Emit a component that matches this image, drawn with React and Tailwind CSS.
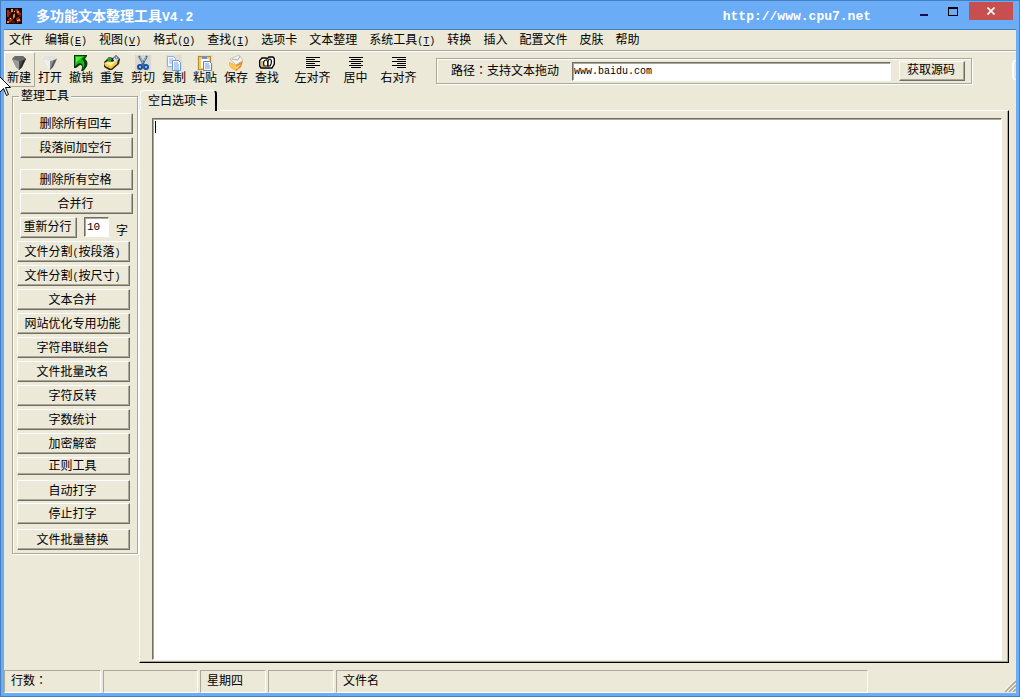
import React from 'react';

const FACE =
  'border border-t-white border-l-white border-r-[#716f64] border-b-[#716f64] bg-[#ece9d8] shadow-[inset_-1px_-1px_0_#aca899] whitespace-nowrap';
const ETCHED = 'border border-[#aca899] shadow-[1px_1px_0_#fff,inset_1px_1px_0_#fff]';
const SUNKEN =
  'border border-t-[#716f64] border-l-[#716f64] border-r-white border-b-white bg-white outline-none shadow-[inset_1px_1px_0_#aca899]';

const menus = [
  ['文件'],
  ['编辑', 'E'],
  ['视图', 'V'],
  ['格式', 'O'],
  ['查找', 'I'],
  ['选项卡'],
  ['文本整理'],
  ['系统工具', 'T'],
  ['转换'],
  ['插入'],
  ['配置文件'],
  ['皮肤'],
  ['帮助'],
];

function Icon({ children }) {
  return (
    <svg viewBox="0 0 16 16" className="block h-4 w-4" aria-hidden="true">
      {children}
    </svg>
  );
}

function Gem({ light }) {
  return (
    <Icon>
      <path d="M1 4 4 1h8l3 3-4 8-3 3-3-3z" fill={light ? '#d0d0d0' : '#808080'} />
      <path d="M1 4 8 6v9l-3-3z" fill={light ? '#f0f0f0' : '#9a9a9a'} />
      <path d="M8 6 15 4l-4 8-3 3z" fill={light ? '#8d8d8d' : '#4a4a4a'} />
      <path d="M12 5 15 3l-4 9-3 3z" fill={light ? '#555' : '#262626'} />
      <path d="M1 4 4 1h8l3 3-7 2z" fill={light ? '#e2e2e2' : '#6a6a6a'} />
    </Icon>
  );
}

function Lines({ rows }) {
  return (
    <Icon>
      {rows.map(([x, w], i) => (
        <rect key={i} x={x} y={2 + i * 2} width={w} height="1" fill="#000" />
      ))}
    </Icon>
  );
}

const icons = {
  undo: (
    <Icon>
      <path d="M1 0h13v1l-2 3c4 3 3 8-2 12H8c2-4 1-6-1-6l-4 3H1z" fill="#063b06" />
      <path d="M2 1h10L9 4c3 3 3 6 1 10 0-4-1-6-4-6l-4 3z" fill="#18b818" />
      <path d="M3 2h6L3 8z" fill="#5be53b" />
    </Icon>
  ),
  redo: (
    <Icon>
      <path d="m0 7 5-5 4 1 3-3 4 4-1 5-7 6H5l-5-3z" fill="#222" />
      <path d="m0 8 4-2 5 1 5-2-1 4-6 5-6-3z" fill="#f6c83a" />
      <path d="m1 8 6-1 5-1-5 5z" fill="#fff3a5" />
      <path d="m3 5 2-3 3 2-2 3z" fill="#2aa52e" />
      <path d="m9 4 3-3 3 3-4 3z" fill="#d5e9fa" />
      <path d="m11 2 1 2 2-1" stroke="#3978cc" fill="none" />
    </Icon>
  ),
  cut: (
    <Icon>
      <path fill="#d9d7d1" d="M0 0h16v16H0z" />
      <path d="m4 1 5 9M12 1 7 10" stroke="#40658f" strokeWidth="2" />
      <path d="m5 2 3 6M11 2 9 6" stroke="#a5c4df" />
      <circle cx="5" cy="12" r="2" fill="none" stroke="#174ea8" strokeWidth="2" />
      <circle cx="11" cy="12" r="2" fill="none" stroke="#174ea8" strokeWidth="2" />
    </Icon>
  ),
  copy: (
    <Icon>
      <path fill="#dfddd6" d="M0 0h16v16H0z" />
      <path d="M1.500 1.500h6l2 2v8h-8z" fill="#f6faff" stroke="#8eb0dc" />
      <path d="M3 4h4M3 6h4M3 8h4" stroke="#91b5e8" />
      <path d="M6.500 5.500h6l2 2v8h-8z" fill="#fff" stroke="#6f99d2" />
      <path d="M8 8h4M8 10h5M8 12h5M8 14h5" stroke="#6a9be2" />
    </Icon>
  ),
  paste: (
    <Icon>
      <path fill="#dfddd6" d="M0 0h16v16H0z" />
      <rect x="1.500" y="1.500" width="12" height="13" fill="#f4cb63" stroke="#b78b2b" />
      <rect x="4" y="4" width="8" height="9" fill="#fff" />
      <path d="M5 1h5v3H5z" fill="#7891b5" />
      <path d="M6.500 6.500h6l2 2v7h-8z" fill="#f6faff" stroke="#5584c5" />
      <path d="M8 9h4M8 11h5M8 13h5" stroke="#6a9be2" />
    </Icon>
  ),
  save: (
    <Icon>
      <path d="m1 7 7 3 7-4-2 6-5 4-6-4z" fill="#e98619" />
      <path d="m1 7 7 3v6l-6-4z" fill="#ffc14c" />
      <path d="m2 4 9-4 4 5-7 5z" fill="#f3f3f3" stroke="#b3b1ad" strokeWidth=".7" />
      <path d="m4 4 6 1 2-4" stroke="#aaa" fill="none" />
      <path d="m4 10 4 2 5-3-4 5z" fill="#ffe18c" />
    </Icon>
  ),
  find: (
    <Icon>
      <path d="M.7 5.500 3 3h4l1 1 2-2h4l1.300 1.500V9L13 13H2L.7 11z" fill="#fff" stroke="#000" strokeWidth="1.400" />
      <path d="M2 6h3v6H2z" fill="#f5b726" />
      <path d="M5 11c-1-4 0-6 2-6s2 3 2 6z" fill="#fff" stroke="#000" strokeWidth="1.200" />
      <path d="M9 7c0-2 1-3 2-3s2 2 1 5l-1 2H9z" fill="#fff" stroke="#000" strokeWidth="1.200" />
    </Icon>
  ),
};

const tools = [
  ['新建', <Gem />],
  ['打开', <Gem light />],
  ['撤销', icons.undo],
  ['重复', icons.redo],
  ['剪切', icons.cut],
  ['复制', icons.copy],
  ['粘贴', icons.paste],
  ['保存', icons.save],
  ['查找', icons.find],
];

const aligns = [
  ['左对齐', [[1, 14], [1, 9], [1, 14], [1, 9], [1, 14], [1, 9]]],
  ['居中', [[1, 14], [3, 10], [1, 14], [3, 10], [1, 14], [3, 10]]],
  ['右对齐', [[1, 14], [6, 9], [1, 14], [6, 9], [1, 14], [6, 9]]],
];

function Wide({ children, className = 'h-[21px]' }) {
  return (
    <button type="button" className={`block w-full pr-[2px] leading-3 ${FACE} ${className}`}>
      {children}
    </button>
  );
}

function Mono({ children }) {
  return <span className="font-['Liberation_Mono',monospace] text-[10px] leading-[0]">{children}</span>;
}

function Colon() {
  return (
    <span lang="zh-TW" className="font-['Noto_Sans_CJK_TC',sans-serif] leading-[0]">
      ：
    </span>
  );
}

function Toolbar() {
  return (
    <div className="flex h-[36px] items-start border-t border-white">
      {tools.map(([label, icon], i) => (
        <button
          key={label}
          type="button"
          className={`flex h-[35px] w-[31px] shrink-0 flex-col items-center border pt-[2px] pr-px leading-[14px] ${
            i === 0 ? 'border-t-white border-l-white border-r-[#aca899] border-b-[#aca899]' : 'border-transparent'
          }`}
        >
          {icon}
          <span className="whitespace-nowrap">{label}</span>
        </button>
      ))}
      <div className="w-2 shrink-0" />
      {aligns.map(([label, rows]) => (
        <button
          key={label}
          type="button"
          className="flex h-[35px] w-[43px] shrink-0 flex-col items-center border border-transparent pt-[2px] leading-[14px]"
        >
          <Lines rows={rows} />
          <span className="whitespace-nowrap">{label}</span>
        </button>
      ))}
      <div className={`mt-[6px] mr-11 ml-4 flex h-[26px] min-w-0 flex-1 items-center pr-[6px] pl-[14px] ${ETCHED}`}>
        <label htmlFor="path" className="w-[121px] shrink-0 whitespace-nowrap">
          路径
          <Colon />
          支持文本拖动
        </label>
        <input
          id="path"
          defaultValue="www.baidu.com"
          className={`h-[19px] min-w-0 flex-1 px-px pt-px font-['Liberation_Mono',monospace] text-[10px] ${SUNKEN}`}
        />
        <button type="button" className={`ml-2 h-[20px] w-[66px] shrink-0 pr-[2px] pb-[2px] leading-3 ${FACE}`}>
          获取源码
        </button>
      </div>
      <div className="mt-2 -ml-1 h-[20px] w-1 shrink-0 rounded-l-sm border-y border-l-2 border-white" />
    </div>
  );
}

function Sidebar() {
  return (
    <fieldset className={`mt-[2px] ml-2 w-[126px] shrink-0 self-start px-1 pb-[3px] ${ETCHED}`}>
      <legend className="ml-[2px] bg-[#ece9d8] px-[2px] leading-[14px]">整理工具</legend>
      <div className="flex flex-col gap-[3px] pt-[10px] pl-[3px]">
        <Wide>删除所有回车</Wide>
        <Wide>段落间加空行</Wide>
        <Wide className="mt-2 h-[21px]">删除所有空格</Wide>
        <Wide>合并行</Wide>
        <div className="flex h-[21px] items-start">
          <button type="button" className={`h-[21px] w-[57px] pr-[2px] pb-[2px] leading-3 ${FACE}`}>
            重新分行
          </button>
          <input
            id="chars"
            defaultValue="10"
            className={`ml-[7px] h-[20px] w-[25px] px-[2px] font-['Liberation_Mono',monospace] text-[11px] ${SUNKEN}`}
          />
          <label htmlFor="chars" className="mt-2 ml-[7px] leading-3">
            字
          </label>
        </div>
      </div>
      <div className="flex flex-col gap-[3px] pt-[3px] pr-[3px]">
        <Wide>
          文件分割<Mono>(</Mono>按段落<Mono>)</Mono>
        </Wide>
        <Wide>
          文件分割<Mono>(</Mono>按尺寸<Mono>)</Mono>
        </Wide>
        <Wide>文本合并</Wide>
        <Wide>网站优化专用功能</Wide>
        <Wide>字符串联组合</Wide>
        <Wide>文件批量改名</Wide>
        <Wide>字符反转</Wide>
        <Wide>字数统计</Wide>
        <Wide>加密解密</Wide>
        <Wide className="h-[18px]">正则工具</Wide>
        <Wide className="mt-[2px] h-[21px]">自动打字</Wide>
        <Wide className="-mt-px h-[21px]">停止打字</Wide>
        <Wide className="mt-[2px] h-[21px]">文件批量替换</Wide>
      </div>
    </fieldset>
  );
}

function Cell({ children, className }) {
  return (
    <div
      className={`h-[23px] border border-t-[#aca899] border-l-[#aca899] border-r-white border-b-white px-[6px] leading-[21px] whitespace-nowrap ${className}`}
    >
      {children}
    </div>
  );
}

export default function App() {
  return (
    <div
      lang="zh-CN"
      className="relative flex h-screen flex-col border border-[#4480c0] bg-[#6aacf6] px-[3px] pb-[3px] font-['Liberation_Sans','Noto_Sans_CJK_SC',sans-serif] text-xs leading-[14px] text-black"
    >
      <header className="flex h-7 shrink-0 items-start">
        <svg viewBox="0 0 16 16" className="mt-[7px] ml-[2px] h-4 w-4" aria-hidden="true">
          <path fill="#160703" d="M0 0h16v16H0z" />
          <path d="M1 2h2v2h2v3H3v2H1zM9 1h3l1 3 2 1v3l-3-1-2-3zM2 11l3-2 2 3-3 3zM10 10l3-1 2 4-4 2z" fill="#a82613" />
          <path d="M5 1h2v3H5zM11 3h2v2h-2zM7 7l2-2v4L7 11zM12 11h2v2h-2zM1 13h2v2H1z" fill="#e78a3b" />
          <path d="M3 5h2v2H3zM13 7h2v2h-2zM6 13h3v2H6z" fill="#631207" />
          <path d="M8 3h1v1H8zM4 10h1v1H4zM11 12h1v1h-1z" fill="#f5cf8a" />
        </svg>
        <h1 className="mt-[7px] ml-[14px] text-[14px] leading-4 font-bold whitespace-nowrap text-white">
          多功能文本整理工具
          <span className="font-['Liberation_Mono',monospace] text-[13px] leading-[0]">V4.2</span>
        </h1>
        <a
          href="http://www.cpu7.net"
          className="mt-2 mr-[49px] ml-auto font-['Liberation_Mono',monospace] text-[13px] leading-4 font-bold text-white"
        >
          http://www.cpu7.net
        </a>
        <button type="button" aria-label="最小化" className="mt-[13px] h-[2px] w-2 bg-[#1c0a50]" />
        <button type="button" aria-label="最大化" className="mt-[6px] ml-5 h-[9px] w-[10px] border border-t-2 border-black" />
        <button
          type="button"
          aria-label="关闭"
          className="mt-px mr-[3px] ml-[11px] flex h-[18px] w-[44px] items-center justify-center bg-[#c84f4f]"
        >
          <svg viewBox="0 0 8 8" className="h-2 w-2" aria-hidden="true">
            <path d="m.5.500 7 7M7.500.500l-7 7" stroke="#fff" strokeWidth="1.600" />
          </svg>
        </button>
      </header>

      <main className="flex min-h-0 flex-1 flex-col border-t border-[#4a80b8] bg-[#ece9d8]">
        <nav className="flex h-[21px] shrink-0 items-center gap-3 border-b border-[#aca899] pl-[5px]">
          {menus.map(([label, key]) => (
            <button key={label} type="button" className="shrink-0 whitespace-nowrap">
              {label}
              {key && (
                <Mono>
                  (<u>{key}</u>)
                </Mono>
              )}
            </button>
          ))}
        </nav>
        <Toolbar />
        <div className="flex min-h-0 flex-1">
          <Sidebar />
          <section className="mt-[3px] mr-[7px] ml-px flex min-w-0 flex-1 flex-col">
            <button
              type="button"
              className="z-10 -mb-px ml-px h-[21px] w-[77px] rounded-t-sm border-t border-r-2 border-l border-t-white border-r-black border-l-white bg-[#ece9d8] whitespace-nowrap"
            >
              空白选项卡
            </button>
            <div className="relative flex min-h-0 flex-1 border border-t-white border-r-black border-b-black border-l-white pt-[7px] pr-[6px] pb-[2px] pl-3 shadow-[inset_-1px_-1px_0_#aca899]">
              <textarea
                aria-label="空白选项卡"
                className={`min-w-0 flex-1 resize-none p-[2px] caret-transparent ${SUNKEN}`}
              />
              <span className="pointer-events-none absolute top-[10px] left-[15px] h-3 w-px bg-black" />
            </div>
          </section>
        </div>
        <footer className="mt-[7px] flex shrink-0 gap-[2px]">
          <Cell className="w-[97px]">
            行数
            <Colon />
          </Cell>
          <Cell className="w-[95px]" />
          <Cell className="w-[66px]">星期四</Cell>
          <Cell className="w-[66px]" />
          <Cell className="w-[532px]">文件名</Cell>
          <svg viewBox="0 0 12 12" className="mt-[10px] ml-auto h-3 w-3" aria-hidden="true">
            <path d="M1 12 12 1M5 12l7-7M9 12l3-3" stroke="#aca899" strokeWidth="1.600" />
            <path d="M0 11 11 0M4 11l7-7M8 11l3-3" stroke="#fff" strokeWidth=".7" />
          </svg>
        </footer>
      </main>

      <svg viewBox="0 0 12 21" className="pointer-events-none absolute top-[75px] left-[-2px] h-[21px] w-3" aria-hidden="true">
        <path d="M.5.500v16l4-4 3 7 2-1-3-7h5z" fill="#fff" stroke="#000" />
      </svg>
    </div>
  );
}
